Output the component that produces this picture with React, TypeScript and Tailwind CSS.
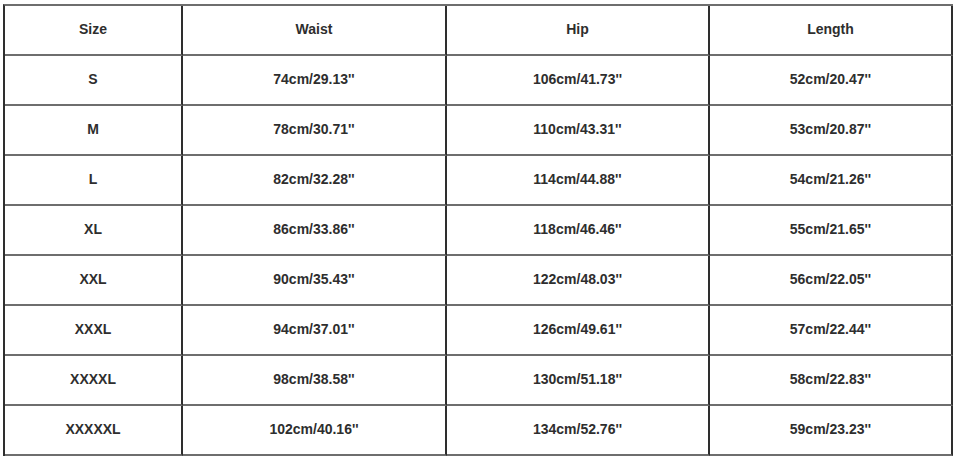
const headers = ["Size", "Waist", "Hip", "Length"];

const rows = [
  ["S", "74cm/29.13''", "106cm/41.73''", "52cm/20.47''"],
  ["M", "78cm/30.71''", "110cm/43.31''", "53cm/20.87''"],
  ["L", "82cm/32.28''", "114cm/44.88''", "54cm/21.26''"],
  ["XL", "86cm/33.86''", "118cm/46.46''", "55cm/21.65''"],
  ["XXL", "90cm/35.43''", "122cm/48.03''", "56cm/22.05''"],
  ["XXXL", "94cm/37.01''", "126cm/49.61''", "57cm/22.44''"],
  ["XXXXL", "98cm/38.58''", "130cm/51.18''", "58cm/22.83''"],
  ["XXXXXL", "102cm/40.16''", "134cm/52.76''", "59cm/23.23''"],
];

export default function App() {
  const all = [headers, ...rows];
  return (
    <div className="w-[954px] h-[457px] bg-white pt-[4px] pl-[3px] font-['Liberation_Sans',Arial,sans-serif]">
      <div className="grid grid-cols-[178px_264px_263px_243px] w-[950px] border-t-2 border-l-2 border-t-[#6e6e6e] border-l-[#2e2e2e]">
        {all.map((row, i) =>
          row.map((cell, j) => (
            <div
              key={`${i}-${j}`}
              className="h-[50px] pb-[2px] flex items-center justify-center border-b-2 border-r-2 border-b-[#6e6e6e] border-r-[#2e2e2e] text-[14px] font-bold text-[#2e2e2e]"
            >
              {cell}
            </div>
          ))
        )}
      </div>
    </div>
  );
}
